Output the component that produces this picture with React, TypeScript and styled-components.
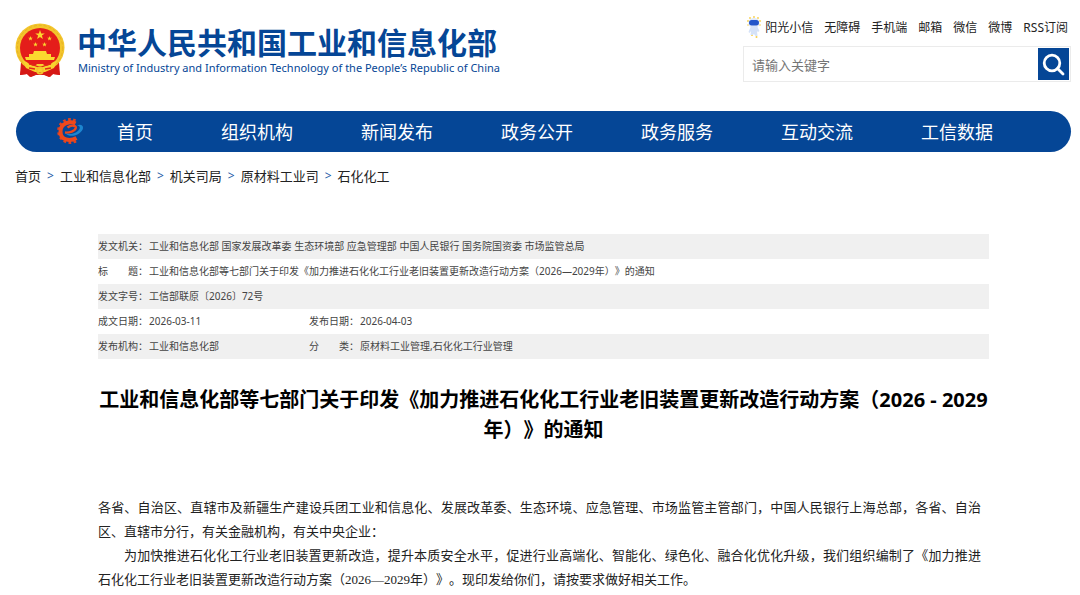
import React from "react";
import styled, { createGlobalStyle } from "styled-components";

const BLUE = "#054696";
const SANS = '"Noto Sans", "Noto Sans CJK SC", sans-serif';

const GlobalStyle = createGlobalStyle`
  *, *::before, *::after { box-sizing: border-box; }
  body {
    margin: 0;
    background: #fff;
    color: #222;
    font-family: ${SANS};
    text-spacing-trim: space-all;
  }
  a { color: inherit; text-decoration: none; }
`;

const Page = styled.div`
  padding: 0 9px 0 15px;
`;

const Header = styled.header`
  display: flex;
  justify-content: space-between;
  align-items: flex-start;
  height: 111px;
  padding-top: 15px;
`;

const Brand = styled.a`
  display: flex;
  gap: 12px;
  padding-top: 8px;
  color: ${BLUE};
`;

const BrandText = styled.div`
  display: flex;
  flex-direction: column;
  white-space: nowrap;
`;

const BrandName = styled.span`
  font: 700 30px/36px "Noto Sans CJK SC", sans-serif;
`;

const BrandEnglish = styled.span`
  padding-left: 1px;
  font-size: 11px;
  line-height: 18px;
`;

const Tools = styled.div`
  display: flex;
  flex-direction: column;
  gap: 7px;
  width: 328px;
`;

const QuickLinks = styled.nav`
  display: flex;
  justify-content: flex-end;
  align-items: center;
  gap: 11px;
  height: 24px;
  padding-right: 3px;
  font-size: 12px;
  white-space: nowrap;
`;

const QuickLink = styled.a`
  display: flex;
  align-items: center;
  gap: 4px;
`;

const SearchForm = styled.form`
  display: flex;
  height: 36px;
  padding: 1px;
  border: 1px solid #ebebeb;
`;

const SearchInput = styled.input`
  flex: 1;
  min-width: 0;
  padding: 2px 7px 0;
  border: 0;
  outline: 0;
  font: 13px ${SANS};
  &::placeholder { color: #757575; }
`;

const SearchButton = styled.button`
  display: flex;
  align-items: center;
  justify-content: center;
  width: 31px;
  padding: 0;
  border: 0;
  background: ${BLUE};
`;

const MainNav = styled.nav`
  display: flex;
  align-items: center;
  gap: 68px;
  height: 41px;
  margin-left: 1px;
  padding: 0 0 2px 40px;
  border-radius: 21px;
  background: ${BLUE};
  color: #fff;
  font-size: 18px;
  white-space: nowrap;
`;

const NavHome = styled.a`
  display: flex;
  align-items: center;
  gap: 33px;
`;

const Crumbs = styled.nav`
  display: flex;
  gap: 6px;
  padding-top: 13px;
  font-size: 13px;
  line-height: 22px;
`;

const CrumbMark = styled.span`
  color: #1d5aa6;
  font-size: 12px;
`;

const Article = styled.main`
  padding: 47px 82px 0 83px;
`;

const Meta = styled.table`
  width: 100%;
  table-layout: fixed;
  border-collapse: collapse;
  color: #444;
  font-size: 10px;
  line-height: 15px;
`;

const LabelColumn = styled.col`
  width: 51px;
`;

const DateColumn = styled.col`
  width: 160px;
`;

const MetaRow = styled.tr`
  height: 25px;
  &:nth-child(odd) { background: #f0f0f0; }
`;

const MetaLabel = styled.th`
  padding: 0;
  font-weight: 400;
  text-align: left;
  white-space: nowrap;
`;

const MetaValue = styled.td`
  padding: 0;
`;

const Title = styled.h1`
  margin: 26px 0 0;
  color: #000;
  font-size: 20px;
  line-height: 30px;
  text-align: center;
`;

const Body = styled.div`
  padding: 51px 8px 0 0;
  color: #222;
  font: 13px/24px "Liberation Serif", "Noto Sans CJK SC", serif;
  text-align: justify;
`;

const Paragraph = styled.p<{ $indent?: boolean }>`
  margin: 0;
  text-indent: ${(p) => (p.$indent ? "2em" : "0")};
`;

const STAR = "M0-5 1.2-1.6 4.8-1.5 1.9.6 2.9 4 0 2-2.9 4-1.9.6-4.8-1.5-1.2-1.6Z";

const Emblem = () => (
  <svg width="50" height="54" viewBox="0 0 50 54" aria-hidden="true">
    <path d="M6 39 5 52l7-1 4 3 5-2h8l5 2 4-3 7 1-1-13Z" fill="#d91a16" />
    <ellipse cx="25" cy="24.500" rx="24.500" ry="24" fill="#f3c52c" />
    <circle cx="25" cy="25" r="22.700" fill="none" stroke="#e6b225" strokeWidth="1" strokeDasharray="3 2" />
    <circle cx="25" cy="25" r="20" fill="#e41d1a" />
    <g fill="#fbd92f">
      <path d={STAR} transform="translate(25 12)" />
      <path d={STAR} transform="translate(15.500 15.500) scale(.5)" />
      <path d={STAR} transform="translate(34.500 15.500) scale(.5)" />
      <path d={STAR} transform="translate(20.500 21.500) scale(.5)" />
      <path d={STAR} transform="translate(29.500 21.500) scale(.5)" />
      <path d="M19 28h12l1 3h4v3h4l-1 3H11l-1-3h4v-3h4Z" />
    </g>
    <path d="M8 38c5 0 6 5 12 5l2-2h6l2 2c6 0 7-5 12-5l-3 7-9 4H20l-9-4Z" fill="#f8d22e" />
    <path d="M14 41c4 0 7 3 11 3s7-3 11-3M14 45l6 1M36 45l-6 1" fill="none" stroke="#e02a19" strokeWidth="1.300" />
    <path d="M7 43c4 5 8 6 13 6v3l-5 2-3-3-7 1ZM43 43c-4 5-8 6-13 6v3l5 2 3-3 7 1Z" fill="#d61815" />
    <circle cx="25" cy="47.500" r="3" fill="none" stroke="#f3c52c" strokeWidth="1.800" />
  </svg>
);

const Mascot = () => (
  <svg width="14" height="22" viewBox="0 0 14 22" aria-hidden="true">
    <g fill="#f8cf4a">
      <circle cx="3" cy="2" r=".9" />
      <circle cx="7" cy="1" r=".9" />
      <circle cx="11" cy="2" r=".9" />
      <circle cx="1" cy="5" r=".9" />
      <circle cx="13" cy="5" r=".9" />
      <circle cx="1" cy="9" r=".8" />
      <circle cx="13" cy="9" r=".8" />
      <circle cx="5" cy="19" r="1" />
      <circle cx="9.500" cy="21" r="1" />
    </g>
    <ellipse cx="7" cy="7" rx="5.500" ry="5" fill="#dfe8fa" />
    <rect x="2" y="4" width="10" height="5.500" rx="2.700" fill="#2456c9" />
    <path d="M4 10h6l2.500 5-1.500 1-1-1 .5 5H8.500L7 18l-1.500 1H3.500L4 15l-1.500 2-1-1Z" fill="#d5e2f8" />
  </svg>
);

const GearLogo = () => (
  <svg width="28" height="28" viewBox="0 0 28 28" fill="none" aria-hidden="true">
    <path d="M19.500 3.800A11.500 11.500 0 1 0 20.500 23.500" stroke="#e2421f" strokeWidth="3" strokeDasharray="2.600 2.400" />
    <path d="M19.500 6.500C15 4 4.500 5.500 4.500 14.500S14 24.500 20.500 21" stroke="#ee481b" strokeWidth="4" />
    <path d="M9 15.500c4.500.5 10-1.500 10.800-4.500.6-2.500-4.300-3.500-8.300-.5" stroke="#ee481b" strokeWidth="2.400" />
    <path d="M9.500 16.500c5 1.500 12-.5 14-4.500 1-2.200-.3-3.500-2.500-3.500 3.300-1.500 6.500-.3 6 2.800-.8 5.500-12 10.700-17.500 5.200Z" fill="#1d86cf" />
  </svg>
);

const SearchIcon = () => (
  <svg width="23" height="23" viewBox="0 0 23 23" fill="none" stroke="#fff" strokeWidth="2.800" aria-hidden="true">
    <circle cx="10" cy="10" r="7.800" />
    <path d="m15.500 15.500 5.500 5.500" strokeLinecap="round" />
  </svg>
);

const quickLinks = ["无障碍", "手机端", "邮箱", "微信", "微博", "RSS订阅"];
const sections = ["组织机构", "新闻发布", "政务公开", "政务服务", "互动交流", "工信数据"];
const crumbs = ["首页", "工业和信息化部", "机关司局", "原材料工业司", "石化化工"];
const meta: string[][] = [
  ["发文机关：", "工业和信息化部 国家发展改革委 生态环境部 应急管理部 中国人民银行 国务院国资委 市场监管总局"],
  ["标　　题：", "工业和信息化部等七部门关于印发《加力推进石化化工行业老旧装置更新改造行动方案（2026—2029年）》的通知"],
  ["发文字号：", "工信部联原〔2026〕72号"],
  ["成文日期：", "2026-03-11", "发布日期：", "2026-04-03"],
  ["发布机构：", "工业和信息化部", "分　　类：", "原材料工业管理,石化化工行业管理"],
];

export default function App() {
  return (
    <Page lang="zh-CN">
      <GlobalStyle />
      <Header>
        <Brand href="#">
          <Emblem />
          <BrandText>
            <BrandName>中华人民共和国工业和信息化部</BrandName>
            <BrandEnglish>Ministry of Industry and Information Technology of the People’s Republic of China</BrandEnglish>
          </BrandText>
        </Brand>
        <Tools>
          <QuickLinks>
            <QuickLink href="#"><Mascot />阳光小信</QuickLink>
            {quickLinks.map((t) => <QuickLink href="#" key={t}>{t}</QuickLink>)}
          </QuickLinks>
          <SearchForm onSubmit={(e) => e.preventDefault()}>
            <SearchInput type="text" placeholder="请输入关键字" aria-label="请输入关键字" />
            <SearchButton type="submit" aria-label="搜索"><SearchIcon /></SearchButton>
          </SearchForm>
        </Tools>
      </Header>
      <MainNav>
        <NavHome href="#"><GearLogo />首页</NavHome>
        {sections.map((t) => <a href="#" key={t}>{t}</a>)}
      </MainNav>
      <Crumbs>
        {crumbs.map((t, i) => (
          <React.Fragment key={t}>
            {i > 0 && <CrumbMark>&gt;</CrumbMark>}
            <a href="#">{t}</a>
          </React.Fragment>
        ))}
      </Crumbs>
      <Article>
        <Meta>
          <colgroup>
            <LabelColumn />
            <DateColumn />
            <LabelColumn />
            <col />
          </colgroup>
          <tbody>
            {meta.map(([label, value, label2, value2]) => (
              <MetaRow key={label}>
                <MetaLabel scope="row">{label}</MetaLabel>
                <MetaValue colSpan={label2 ? 1 : 3}>{value}</MetaValue>
                {label2 && <MetaLabel scope="row">{label2}</MetaLabel>}
                {label2 && <MetaValue>{value2}</MetaValue>}
              </MetaRow>
            ))}
          </tbody>
        </Meta>
        <Title>工业和信息化部等七部门关于印发《加力推进石化化工行业老旧装置更新改造行动方案（2026 - 2029年）》的通知</Title>
        <Body>
          <Paragraph>各省、自治区、直辖市及新疆生产建设兵团工业和信息化、发展改革委、生态环境、应急管理、市场监管主管部门，中国人民银行上海总部，各省、自治区、直辖市分行，有关金融机构，有关中央企业：</Paragraph>
          <Paragraph $indent>为加快推进石化化工行业老旧装置更新改造，提升本质安全水平，促进行业高端化、智能化、绿色化、融合化优化升级，我们组织编制了《加力推进石化化工行业老旧装置更新改造行动方案（2026—2029年）》。现印发给你们，请按要求做好相关工作。</Paragraph>
        </Body>
      </Article>
    </Page>
  );
}
